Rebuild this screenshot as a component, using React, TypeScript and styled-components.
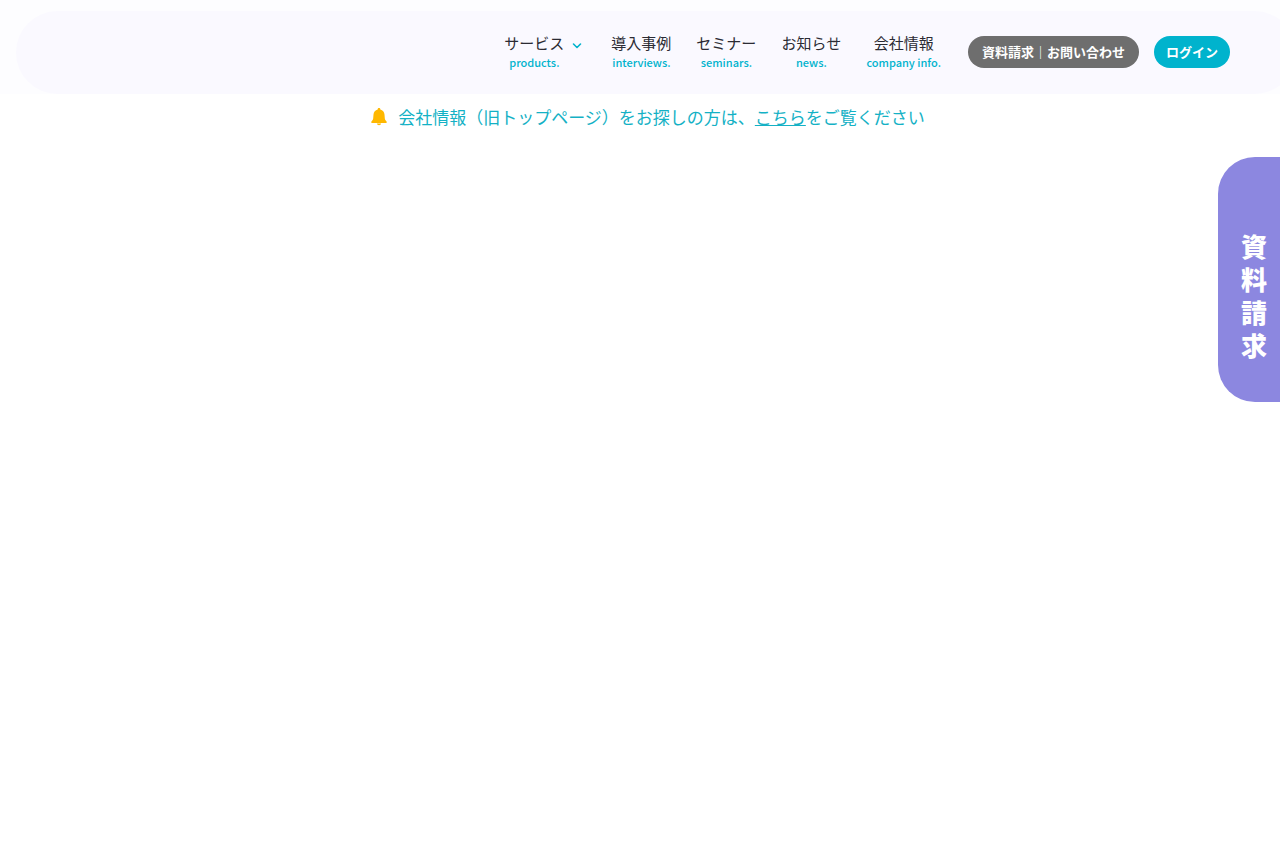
import React from "react";
import styled, { createGlobalStyle } from "styled-components";

const GlobalStyle = createGlobalStyle`
  *, *::before, *::after { box-sizing: border-box; }
  body {
    margin: 0;
    background: #fff;
    color: #333;
    font-family: "Noto Sans CJK JP", "Noto Sans", sans-serif;
    overflow-x: hidden;
  }
  a { color: inherit; text-decoration: none; }
`;

const Header = styled.header`
  padding: 11px 0 0 16px;
  background: #fdfdff;
  overflow: hidden;
`;

const Bar = styled.div`
  display: flex;
  align-items: center;
  justify-content: flex-end;
  height: 83px;
  margin-right: -16px;
  padding: 0 66px 1px 0;
  border-radius: 42px;
  background: #faf9ff;
`;

const Nav = styled.nav`
  display: flex;
  gap: 25px;
  margin-right: 27px;
  padding-bottom: 3px;
`;

const NavItem = styled.a<{ $menu?: boolean }>`
  display: flex;
  align-items: flex-start;
  gap: 8px;
  margin-right: ${(p) => (p.$menu ? "4px" : "0")};
`;

const NavText = styled.span`
  display: flex;
  flex-direction: column;
  align-items: center;
`;

const NavLabel = styled.span`
  color: #2b2b33;
  font-size: 15px;
  line-height: 22px;
`;

const NavSub = styled.span`
  min-width: 60px;
  color: #00b3cd;
  font-size: 11px;
  font-weight: 500;
  line-height: 16px;
  text-align: center;
`;

const Chevron = styled.svg`
  width: 10px;
  height: 22px;
  padding-top: 4px;
`;

const Actions = styled.div`
  display: flex;
  gap: 15px;
`;

const Pill = styled.a<{ $primary?: boolean }>`
  height: 32px;
  padding: 0 ${(p) => (p.$primary ? "12px" : "14px")};
  border-radius: 16px;
  background: ${(p) => (p.$primary ? "#00b3cd" : "#6e6e6e")};
  color: #fff;
  font-size: 13px;
  font-weight: 700;
  line-height: 32px;
  white-space: nowrap;
`;

const Notice = styled.p`
  display: flex;
  align-items: center;
  justify-content: center;
  gap: 11px;
  margin: 0;
  padding: 10px 0 10px 16px;
  color: #14b1c5;
  font-size: 17px;
  line-height: 26px;
`;

const NoticeLink = styled.a`
  text-decoration: underline;
`;

const Bell = styled.svg`
  width: 16px;
  height: 18px;
  flex: none;
`;

const SideTab = styled.a`
  position: fixed;
  top: 157px;
  right: 0;
  padding: 72px 13px 41px 23px;
  border-radius: 37px 0 0 37px;
  background: #8c87e0;
  color: #fff;
  font-size: 26px;
  font-weight: 900;
  line-height: 33px;
`;

const SideTabText = styled.span`
  display: block;
  width: 26px;
  word-break: break-all;
`;

const navItems = [
  { label: "サービス", sub: "products.", menu: true },
  { label: "導入事例", sub: "interviews." },
  { label: "セミナー", sub: "seminars." },
  { label: "お知らせ", sub: "news." },
  { label: "会社情報", sub: "company info." },
];

export default function App() {
  return (
    <>
      <GlobalStyle />
      <Header>
        <Bar>
          <Nav>
            {navItems.map(({ label, sub, menu }) => (
              <NavItem key={label} href="#" $menu={menu}>
                <NavText>
                  <NavLabel>{label}</NavLabel>
                  <NavSub lang="en">{sub}</NavSub>
                </NavText>
                {menu && (
                  <Chevron viewBox="0 0 10 18" aria-hidden="true">
                    <path
                      d="M1.5 8 5 11.5 8.5 8"
                      fill="none"
                      stroke="#00b3cd"
                      strokeWidth="1.6"
                      strokeLinecap="round"
                      strokeLinejoin="round"
                    />
                  </Chevron>
                )}
              </NavItem>
            ))}
          </Nav>
          <Actions>
            <Pill href="#">資料請求｜お問い合わせ</Pill>
            <Pill href="#" $primary>
              ログイン
            </Pill>
          </Actions>
        </Bar>
      </Header>
      <main>
        <Notice>
          <Bell viewBox="0 0 16 18" fill="#ffb800" aria-hidden="true">
            <path d="M8 0c.8 0 1.3.5 1.3 1.2v.3c2.4.6 4 2.5 4.200 4.900l.3 3.800c.1 1.300.5 1.900 1.300 2.700.6.600.9 1.100.7 1.600-.1.300-.4.400-.8.400H1c-.4 0-.7-.1-.8-.4-.2-.5.100-1 .7-1.600.8-.8 1.200-1.400 1.300-2.700l.3-3.800C2.700 4 4.300 2.100 6.700 1.500v-.3C6.700.5 7.200 0 8 0Z" />
            <path d="M5.900 15.600h4.200c-.2 1-1 1.600-2.100 1.600s-1.900-.6-2.100-1.600Z" />
          </Bell>
          <span>
            会社情報（旧トップページ）をお探しの方は、
            <NoticeLink href="#">こちら</NoticeLink>
            をご覧ください
          </span>
        </Notice>
      </main>
      <SideTab href="#">
        <SideTabText>資料請求</SideTabText>
      </SideTab>
    </>
  );
}
